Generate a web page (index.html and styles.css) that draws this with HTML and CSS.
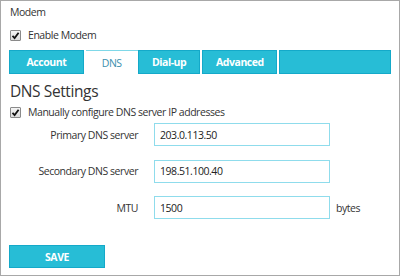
FILE: index.html
```html
<!DOCTYPE html>
<html>
<head>
<meta charset="utf-8">
<link rel="stylesheet" href="styles.css">
</head>
<body>
<div class="frame">
  <div class="title">Modem</div>
  <label class="check-row check-top">
    <span class="cb"><svg viewBox="0 0 9 9" width="9" height="9"><path d="M1.5 4.8 L3.6 7 L7.6 1.8" fill="none" stroke="#111" stroke-width="1.8"/></svg></span>
    <span>Enable Modem</span>
  </label>
  <div class="tabs">
    <div class="tab t-account">Account</div>
    <div class="tab active t-dns">DNS</div>
    <div class="tab t-dial">Dial-up</div>
    <div class="tab t-adv">Advanced</div>
    <div class="tab t-empty"></div>
  </div>
  <h2 class="heading">DNS Settings</h2>
  <label class="check-row check-dns">
    <span class="cb"><svg viewBox="0 0 9 9" width="9" height="9"><path d="M1.5 4.8 L3.6 7 L7.6 1.8" fill="none" stroke="#111" stroke-width="1.8"/></svg></span>
    <span>Manually configure DNS server IP addresses</span>
  </label>
  <div class="form">
    <div class="row">
      <span class="lbl">Primary DNS server</span>
      <span class="field">203.0.113.50</span>
    </div>
    <div class="row">
      <span class="lbl">Secondary DNS server</span>
      <span class="field">198.51.100.40</span>
    </div>
    <div class="row">
      <span class="lbl">MTU</span>
      <span class="field">1500</span>
      <span class="unit">bytes</span>
    </div>
  </div>
  <button class="save">SAVE</button>
</div>
</body>
</html>
```
FILE: styles.css
```css
html, body { margin: 0; padding: 0; background: #fff; }
body { font-family: "Open Sans", "Noto Sans", sans-serif; color: #333; }
.frame {
  width: 400px; height: 276px; box-sizing: border-box;
  border: 1px solid #a8a8a8;
  padding: 2px 8px 0 8px;
  font-size: 10.5px;
  letter-spacing: -0.45px;
}
.title { height: 18px; line-height: 18px; margin-left: 1px; }
.check-row { display: flex; align-items: center; gap: 7px; height: 14px; }
.check-top { margin-top: 7px; }
.check-dns { margin-top: 4px; }
.cb {
  width: 9px; height: 9px; border: 1px solid #8a8a8a; border-radius: 1px;
  background: linear-gradient(#f4f4f4, #dcdcdc);
  display: inline-flex; align-items: center; justify-content: center;
  margin-left: 1px;
}
.cb svg { display: block; }
.tabs { display: flex; margin-top: 8px; height: 24px; }
.tab {
  box-sizing: border-box; height: 24px;
  background: #27bdd6; border: 1px solid #14a9c9;
  color: #fff; font-weight: bold; font-size: 10.5px;
  display: flex; align-items: center; justify-content: center;
  margin-right: 2px;
}
.tab.active {
  background: #fff; border: none; border-top: 1px solid #7fd8e8;
  color: #3b8fae; font-weight: normal; margin-right: 0;
}
.t-account { width: 75px; margin-right: 2px; }
.t-dns { width: 52px; }
.t-dial { width: 63px; }
.t-adv { width: 75px; }
.t-empty { width: 112px; margin-right: 0; }
.heading { font-size: 15.5px; letter-spacing: -0.4px; font-weight: normal; margin: 7px 0 0 1px; height: 20px; line-height: 20px; color: #333; }
.form { margin-top: 4px; }
.row { display: flex; align-items: center; height: 23px; margin-bottom: 13.5px; }
.lbl { width: 129px; text-align: right; margin-right: 16px; }
.field {
  box-sizing: border-box; width: 176px; height: 23px;
  border: 1px solid #8fdcec; padding-left: 5px;
  display: flex; align-items: center; color: #222;
}
.unit { margin-left: 6px; }
.save {
  display: block; margin-top: 26px;
  width: 96px; height: 23px; box-sizing: border-box;
  background: #27bdd6; border: 1px solid #14a9c9;
  color: #fff; font-weight: bold; font-family: "Open Sans", sans-serif; font-size: 10.5px; letter-spacing: -0.4px;
}
```
